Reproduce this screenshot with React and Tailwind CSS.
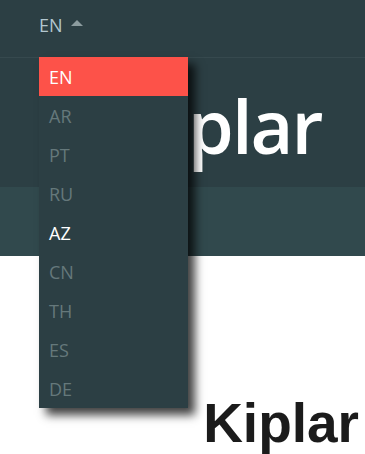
import React from "react";

const langs = [
  { code: "EN", state: "active" },
  { code: "AR", state: "dim" },
  { code: "PT", state: "dim" },
  { code: "RU", state: "dim" },
  { code: "AZ", state: "light" },
  { code: "CN", state: "dim" },
  { code: "TH", state: "dim" },
  { code: "ES", state: "dim" },
  { code: "DE", state: "dim" },
];

export default function App() {
  return (
    <div className="w-[365px] h-[454px] bg-white overflow-hidden font-['Open_Sans',sans-serif]">
      <header className="h-[58px] bg-[#2c3f44] border-b border-[#36494e] pl-[39px] pt-[16px] flex items-start">
        <div className="relative flex">
          <button className="flex items-center gap-[8px] text-[18px] leading-[18px] text-[#b3c7cf]">
            <span>EN</span>
            <svg width="12" height="6" viewBox="0 0 12 6" className="mb-[4px]">
              <path d="M0 6 L6 0 L12 6 Z" fill="#8c9c9f" />
            </svg>
          </button>
          <ul className="absolute left-0 top-[41px] w-[149px] bg-[#2c3f44] shadow-[7px_7px_9px_rgba(0,0,0,0.75)] z-10">
            {langs.map((l) => (
              <li
                key={l.code}
                className={
                  "h-[39px] flex items-center pl-[10px] text-[18px] leading-[18px] " +
                  (l.state === "active"
                    ? "bg-[#fd5249] text-white"
                    : l.state === "light"
                    ? "text-white"
                    : "text-[#65787b]")
                }
              >
                {l.code}
              </li>
            ))}
          </ul>
        </div>
      </header>
      <section className="h-[129px] bg-[#2c3f44] pl-[124px] pt-[31px]">
        <h1 className="text-[74px] leading-none font-semibold tracking-[-2px] text-white">Kiplar</h1>
      </section>
      <div className="h-[69px] bg-[#31494d]" />
      <div className="flex justify-end pr-[6px] pt-[140px]">
        <h2 className="font-['Liberation_Sans',Arial,sans-serif] font-bold text-[55px] leading-none text-[#1b1b1b]">
          Kiplar
        </h2>
      </div>
    </div>
  );
}
